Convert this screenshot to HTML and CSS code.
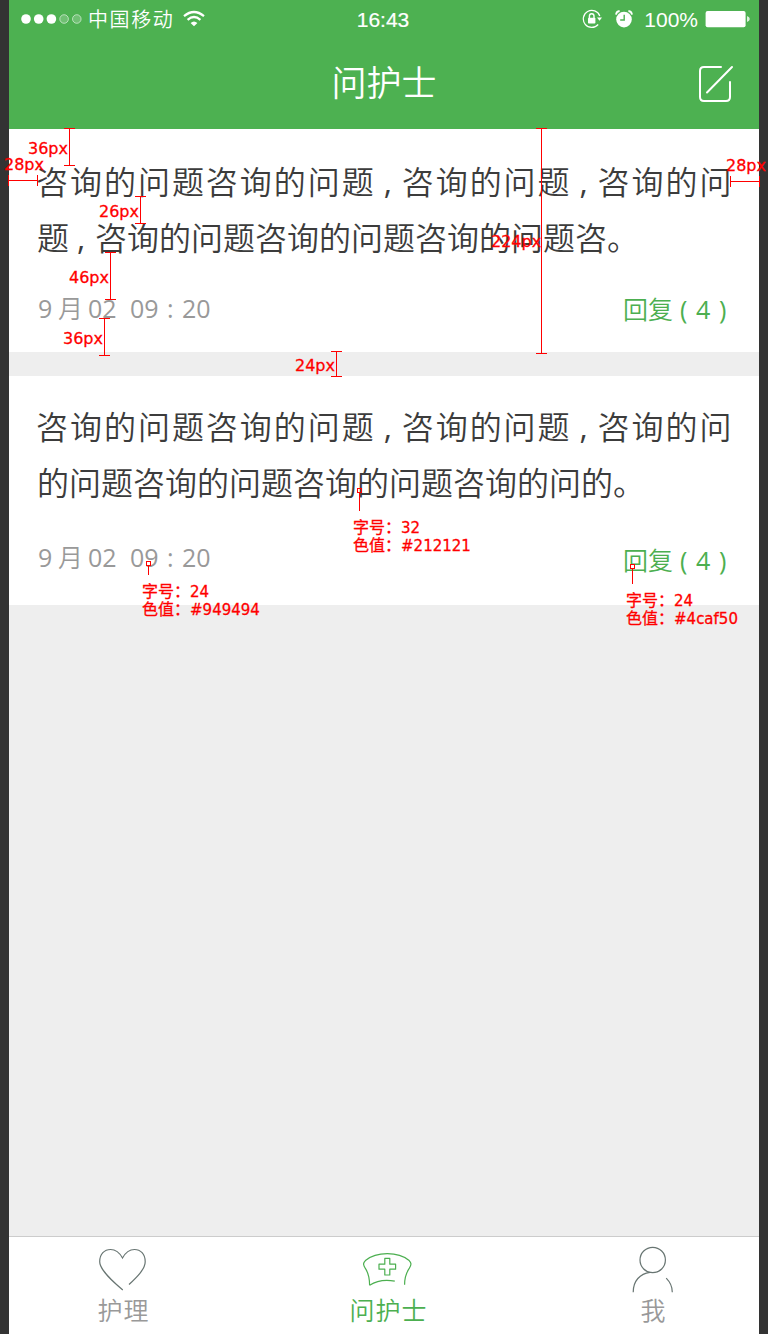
FILE: index.html
```html
<!DOCTYPE html>
<html lang="zh-CN">
<head>
<meta charset="utf-8">
<title>问护士</title>
<link rel="stylesheet" href="styles.css">
</head>
<body>
<div class="phone">
  <header class="header">
    <div class="status">
      <div class="status-left">
        <svg class="signal" width="64" height="12" viewBox="0 0 64 12">
          <g fill="#fff"><circle cx="6" cy="6" r="4.8"/><circle cx="18.7" cy="6" r="4.8"/><circle cx="31.4" cy="6" r="4.8"/></g>
          <g fill="#fff" fill-opacity=".2" stroke="#fff" stroke-opacity=".55" stroke-width="1"><circle cx="44.1" cy="6" r="4.3"/><circle cx="56.8" cy="6" r="4.3"/></g>
        </svg>
        <span class="carrier">中国移动</span>
        <svg class="wifi" width="22" height="18" viewBox="0 0 22 18" fill="none" stroke="#fff" stroke-width="2.2">
          <path d="M1 6.2Q11-2.2 21 6.2"/><path d="M4.6 9.8Q11 4.2 17.4 9.8"/><path d="M7.600 13Q11 9.800 14.400 13L11 16.200Z" fill="#fff" stroke="none"/>
        </svg>
      </div>
      <span class="clock">16:43</span>
      <div class="status-right">
        <svg width="20" height="20" viewBox="0 0 20 20" fill="none" stroke="#fff" stroke-width="1.2">
          <path d="M17.800 7A8.500 8.500 0 1 0 16.200 15.500"/><path d="M15 8.500h5l-2.500 3.200z" fill="#fff" stroke="none"/>
          <rect x="6" y="8.700" width="7.400" height="5.800" rx=".8" fill="#fff" stroke="none"/><path d="M7.400 9V7a2.300 2.300 0 0 1 4.600 0v2" stroke-width="1.400"/>
        </svg>
        <svg class="alarm" width="18" height="18" viewBox="0 0 18 18">
          <circle cx="9" cy="9.600" r="7.800" fill="#fff"/><path d="M1 4.600Q1.400 1.400 4.600 1M17 4.600Q16.600 1.400 13.400 1" fill="none" stroke="#fff" stroke-width="1.800"/>
          <path d="M9.200 4.800V10H5.200" fill="none" stroke="#4db151" stroke-width="1.400"/>
        </svg>
        <span class="percent">100%</span>
        <svg class="battery" width="46" height="18" viewBox="0 0 46 18">
          <rect x=".6" y=".9" width="40" height="16.400" rx="2" fill="#fff"/><path d="M42 6Q44.800 7 44.800 9T42 12Z" fill="#fff" opacity=".8"/>
        </svg>
      </div>
    </div>
    <h1 class="title">问护士</h1>
    <svg class="compose" width="38" height="40" viewBox="0 0 38 40" fill="none" stroke="#fff" stroke-width="2" stroke-linecap="round">
      <path d="M23 3H6Q2 3 2 7V33Q2 37 6 37H28Q32 37 32 33V18"/><path d="M9 28.500 34 3"/>
    </svg>
  </header>

  <main class="list">
    <article class="card">
      <p class="line wide">咨询的问题咨询的问题<span class="comma">,</span>咨询的问题<span class="comma">,</span>咨询的问</p>
      <p class="line">题<span class="comma">,</span>咨询的问题咨询的问题咨询的问题咨。</p>
      <div class="meta">
        <time class="date"><span>9</span><span class="han">月</span><span>02</span><span>09</span><span>:</span><span>20</span></time>
        <a class="reply"><span class="han">回复</span><span>(</span><span>4</span><span>)</span></a>
      </div>
    </article>
    <article class="card second">
      <p class="line wide">咨询的问题咨询的问题<span class="comma">,</span>咨询的问题<span class="comma">,</span>咨询的问</p>
      <p class="line">的问题咨询的问题咨询的问题咨询的问的。</p>
      <div class="meta">
        <time class="date"><span>9</span><span class="han">月</span><span>02</span><span>09</span><span>:</span><span>20</span></time>
        <a class="reply"><span class="han">回复</span><span>(</span><span>4</span><span>)</span></a>
      </div>
    </article>
  </main>

  <nav class="tabs">
    <a class="tab">
      <svg width="50" height="50" viewBox="0 0 50 50" fill="none" stroke="#687572" stroke-width="1.2">
        <path d="M24.800 46C16 38.500 1.700 26.300 1.700 17.700 1.700 10 6.500 5.500 12.500 5.500 18 5.500 21.500 8.500 24.500 14 27.500 8.500 31 5.500 36.500 5.500 42.500 5.500 47.200 10 47.200 17.700 47.200 25 39 33 31 40.500"/>
      </svg>
      <span>护理</span>
    </a>
    <a class="tab active">
      <svg width="50" height="50" viewBox="0 0 50 50" fill="none" stroke="#4caf50" stroke-width="1.2">
        <g transform="translate(-.7 .7)">
        <path d="M7.300 40.500Q7.200 30 3.200 24C.4 19.500.7 18.500 3.500 15.500 14 6.600 36 6.600 46.500 15.500 49.300 18.500 49.400 19.500 46.800 24Q42.300 30.500 42.300 40"/>
        <path d="M7.300 40.500Q18 33.600 32.500 36.400"/>
        <path d="M22.500 13.700h5v5.800h5.800v5h-5.800v5.800h-5v-5.800h-5.800v-5h5.800z" stroke-linejoin="round"/>
        </g>
      </svg>
      <span>问护士</span>
    </a>
    <a class="tab">
      <svg width="50" height="50" viewBox="0 0 50 50" fill="none" stroke="#687572" stroke-width="1.2">
        <circle cx="24.700" cy="16" r="12.700"/><path d="M22 28.400C12 29.500 5.200 37 5.200 48.200"/><path d="M38.200 34.200C42 38 44.300 43 44.300 48.200"/>
      </svg>
      <span>我</span>
    </a>
  </nav>
</div>

<div class="notes">
  <svg class="rules" width="768" height="1334" viewBox="0 0 768 1334" fill="none" stroke="#f00" shape-rendering="crispEdges">
    <path d="M64 128.500h11M69.500 128.500v37M64 165.500h11"/>
    <path d="M8.500 175v11M8.500 180.500h29M37.500 175v11"/>
    <path d="M135 196.500h11M140.500 196.500v27M135 223.500h11"/>
    <path d="M105 252.500h11M110.500 252.500v47M105 299.500h11"/>
    <path d="M99 318.500h11M104.500 318.500v37M99 355.500h11"/>
    <path d="M331 351.500h11M336.500 351.500v25M331 376.500h11"/>
    <path d="M536 128.500h11M541.500 128.500v225M536 353.500h11"/>
    <path d="M730.500 176v11M730.500 181.500h29M759.500 176v11"/>
    <path d="M357.500 488.500h4v4h-4zM359.500 493v18"/>
    <path d="M146.500 561.500h4v4h-4zM148.500 566v9"/>
    <path d="M630.500 564.500h4v4h-4zM632.500 569v15"/>
  </svg>
  <span class="size n1">36px</span>
  <span class="size n2">28px</span>
  <span class="size n3">26px</span>
  <span class="size n4">46px</span>
  <span class="size n5">36px</span>
  <span class="size n6">24px</span>
  <span class="size n7">224px</span>
  <span class="size n8">28px</span>
  <div class="spec s1"><p>字号：<b>32</b></p><p>色值：<b>#212121</b></p></div>
  <div class="spec s2"><p>字号：<b>24</b></p><p>色值：<b>#949494</b></p></div>
  <div class="spec s3"><p>字号：<b>24</b></p><p>色值：<b>#4caf50</b></p></div>
</div>
</body>
</html>
```
FILE: styles.css
```css
* { box-sizing: border-box; margin: 0; padding: 0; }
body {
  position: relative;
  width: 768px;
  height: 1334px;
  overflow: hidden;
  background: #333;
  font-family: "Noto Sans CJK SC", sans-serif;
}
svg { display: block; flex: none; }
.phone {
  display: flex;
  flex-direction: column;
  width: 750px;
  height: 1334px;
  margin-left: 9px;
  background: #eee;
}
.header {
  display: grid;
  grid-template: 38px 91px / 1fr auto 1fr;
  height: 129px;
  background: #4db151;
  color: #fff;
}
.status {
  grid-column: 1 / -1;
  display: grid;
  grid-template-columns: 1fr auto 1fr;
  align-items: center;
  height: 37px;
  padding: 0 8px 0 11px;
}
.status-left, .status-right { display: flex; align-items: center; height: 37px; }
.status-right { justify-content: flex-end; }
.carrier { margin: -1px 0 0 4px; font-size: 20px; line-height: 37px; letter-spacing: 1.6px; font-weight: 350; }
.wifi { margin: 0 0 1px 9px; }
.clock { margin-right: 5px; font: 21px/37px "Liberation Sans", sans-serif; padding-top: 1px; -webkit-text-stroke: .2px #fff; }
.alarm { margin-left: 13px; }
.percent { margin: 1px 7px 0 11px; font: 21px/37px "Liberation Sans", sans-serif; }
.title {
  grid-column: 2;
  padding-top: 17px;
  font-size: 35px;
  line-height: 52px;
  font-weight: 350;
}
.compose { justify-self: end; margin: 26px 23px 0 0; }

.list { flex: 1; display: flex; flex-direction: column; gap: 24px; }
.card { height: 223px; padding: 23px 28px 0 27px; background: #fff; }
.card.second { height: 229px; padding-top: 21px; }
.line {
  height: 56px;
  padding-left: 1px;
  color: #3c3c3c;
  font-size: 32px;
  line-height: 56px;
  font-weight: 350;
  white-space: nowrap;
}
.wide { padding-left: 0; letter-spacing: 1.97px; }
.comma { display: inline-block; width: 26px; padding-left: 8px; font-family: "Open Sans", sans-serif; font-weight: 400; letter-spacing: 0; }
.meta {
  display: flex;
  justify-content: space-between;
  padding: 25px 0 0 2px;
  font-family: "Open Sans", "Noto Sans CJK SC", sans-serif;
  font-size: 25px;
  line-height: 38px;
  font-weight: 400;
}
.han { font-weight: 350; }
.reply { padding-top: 1px; }
.second .reply { padding-top: 3px; }
.date { display: grid; grid-template-columns: 20px 30px 42px 37px 15px 30px; color: #999; }
.reply { display: grid; grid-template-columns: 57px 16px 23px 12px; color: #4caf50; }
.second .meta { padding-top: 29px; }

.tabs {
  display: grid;
  grid-template-columns: 227px 303px 227px;
  height: 98px;
  border-top: 1px solid #ccc;
  background: #fff;
  overflow: hidden;
}
.tab {
  display: flex;
  flex-direction: column;
  align-items: center;
  padding-top: 7px;
  color: #999;
  font-size: 25px;
  line-height: 30px;
  font-weight: 350;
  letter-spacing: 1px;
}
.tab span { margin-left: 2px; }
.active { color: #4caf50; }

.notes { position: absolute; inset: 0; color: #f00; -webkit-text-stroke: .3px #f00; }
.rules, .size, .spec { position: absolute; }
.rules { top: 0; left: 0; }
.size { font: 16px/20px "DejaVu Sans", sans-serif; }
.n1 { left: 28px; top: 139px; }
.n2 { left: 4px; top: 155px; }
.n3 { left: 99px; top: 202px; }
.n4 { left: 69px; top: 268px; }
.n5 { left: 63px; top: 329px; }
.n6 { left: 295px; top: 356px; }
.n7 { left: 491px; top: 232px; }
.n8 { left: 726px; top: 156px; }
.spec { font-size: 16px; line-height: 18px; white-space: nowrap; }
.spec p { height: 18px; }
.spec b { font: 15px/1 "DejaVu Sans", sans-serif; }
.s1 { left: 353px; top: 517px; }
.s2 { left: 142px; top: 581px; }
.s3 { left: 626px; top: 590px; }
```
